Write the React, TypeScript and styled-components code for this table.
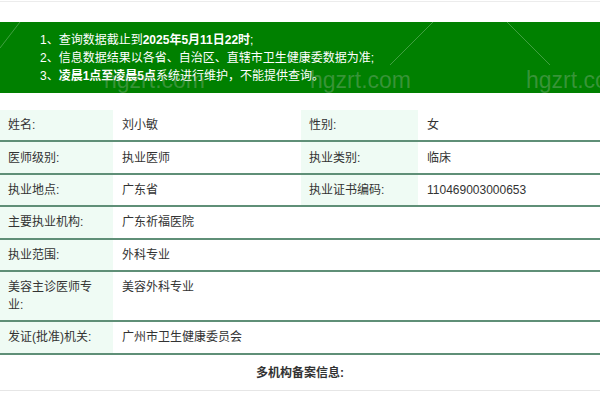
import React from "react";
import styled, { createGlobalStyle } from "styled-components";

const Global = createGlobalStyle`
  html, body { margin: 0; padding: 0; background: #fff; }
  body { font-family: "Liberation Sans", "Noto Sans CJK SC", sans-serif; }
`;

const Page = styled.div`
  position: relative;
  width: 600px;
  height: 400px;
  overflow: hidden;
  border-top: 1px solid #ececec;
  margin-top: 1px;
`;

const Banner = styled.div`
  position: relative;
  margin-top: 20px;
  background: #008000;
  color: #fff;
  padding: 9px 0 8px 40px;
  font-size: 12px;
  line-height: 18px;
  height: 54px;
`;

const Note = styled.div``;

const Strong = styled.b`
  font-weight: 700;
`;

const Watermark = styled.span<{ $left: number; $top: number }>`
  position: absolute;
  left: ${(p) => p.$left}px;
  top: ${(p) => p.$top}px;
  font-family: "Liberation Sans", sans-serif;
  font-size: 23px;
  color: rgba(200, 200, 200, 0.28);
  pointer-events: none;
  white-space: nowrap;
`;

const Lines = styled.svg`
  position: absolute;
  left: 0;
  top: 0;
  width: 600px;
  height: 71px;
  pointer-events: none;
`;

const Table = styled.div`
  margin-top: 17px;
  font-size: 12px;
  line-height: 18px;
  color: #333;
`;

const Row = styled.div<{ $full?: boolean }>`
  display: grid;
  grid-template-columns: ${(p) => (p.$full ? "113px 1fr" : "113px 188px 117px 1fr")};
  border-bottom: 2px solid #5f8f77;
`;

const Label = styled.div`
  background: #effbf4;
  padding: 6.2px 8px 6.2px 8px;
`;

const Value = styled.div`
  background: #fff;
  padding: 6.2px 9px;
`;

const Footer = styled.div`
  text-align: center;
  font-weight: 700;
  font-size: 12px;
  line-height: 18px;
  color: #333;
  padding: 9px 0 8px;
  border-bottom: 1px solid #e6e6e6;
`;

type Cell = [string, string];

const pairRows: Cell[][] = [
  [["姓名:", "刘小敏"], ["性别:", "女"]],
  [["医师级别:", "执业医师"], ["执业类别:", "临床"]],
  [["执业地点:", "广东省"], ["执业证书编码:", "110469003000653"]],
];

const fullRows: Cell[] = [
  ["主要执业机构:", "广东祈福医院"],
  ["执业范围:", "外科专业"],
  ["美容主诊医师专业:", "美容外科专业"],
  ["发证(批准)机关:", "广州市卫生健康委员会"],
];

export default function App() {
  return (
    <>
      <Global />
      <Page>
        <Banner>
          <Lines viewBox="0 0 600 71">
            <line x1="0" y1="26" x2="20" y2="0" stroke="rgba(255,255,255,0.25)" strokeWidth="1" />
            <line x1="433" y1="0" x2="390" y2="43" stroke="rgba(255,255,255,0.25)" strokeWidth="1" />
            <line x1="507" y1="0" x2="550" y2="43" stroke="rgba(255,255,255,0.25)" strokeWidth="1" />
          </Lines>
          <Note>
            1、查询数据截止到<Strong>2025年5月11日22时</Strong>;
          </Note>
          <Note>2、信息数据结果以各省、自治区、直辖市卫生健康委数据为准;</Note>
          <Note>
            3、<Strong>凌晨1点至凌晨5点</Strong>系统进行维护，不能提供查询。
          </Note>
          <Watermark $left={104} $top={49}>hgzrt.com</Watermark>
          <Watermark $left={310} $top={49}>hgzrt.com</Watermark>
          <Watermark $left={526} $top={49}>hgzrt.com</Watermark>
        </Banner>
        <Table>
          {pairRows.map((r, i) => (
            <Row key={i}>
              <Label>{r[0][0]}</Label>
              <Value>{r[0][1]}</Value>
              <Label>{r[1][0]}</Label>
              <Value>{r[1][1]}</Value>
            </Row>
          ))}
          {fullRows.map((r, i) => (
            <Row key={i} $full>
              <Label>{r[0]}</Label>
              <Value>{r[1]}</Value>
            </Row>
          ))}
          <Footer>多机构备案信息:</Footer>
        </Table>
      </Page>
    </>
  );
}
